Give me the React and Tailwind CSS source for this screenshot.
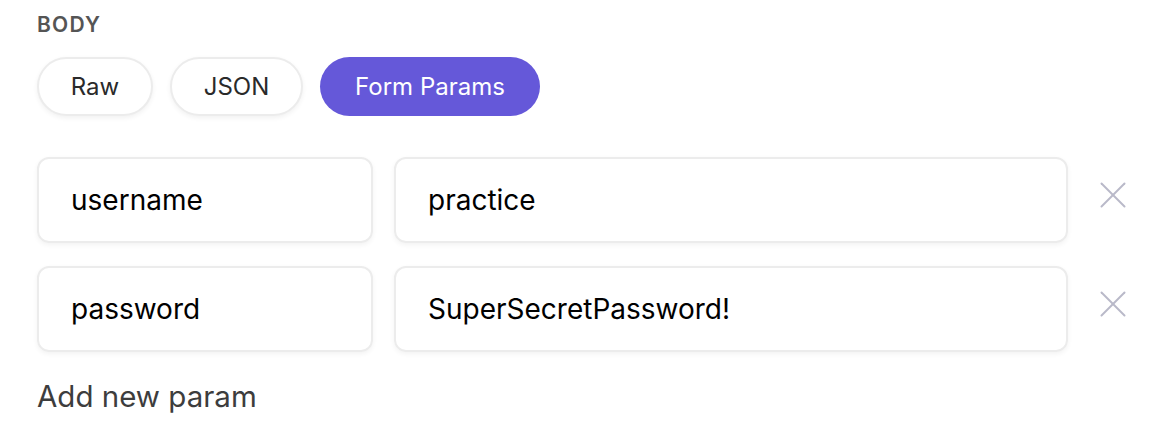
import React, { useState } from 'react'

const XIcon = () => (
  <svg width="26" height="26" viewBox="0 0 26 26" fill="none" stroke="#b9b9c9" strokeWidth="2" strokeLinecap="round">
    <path d="M1.5 1.5 L24.5 24.5" />
    <path d="M24.5 1.5 L1.5 24.5" />
  </svg>
)

const App = () => {
  const [mode, setMode] = useState('form')
  const [params] = useState([
    { key: 'username', value: 'practice' },
    { key: 'password', value: 'SuperSecretPassword!' },
  ])

  const tabs = [
    { id: 'raw', label: 'Raw', w: 'w-[116px]' },
    { id: 'json', label: 'JSON', w: 'w-[133px]' },
    { id: 'form', label: 'Form Params', w: 'w-[220px]' },
  ]

  return (
    <div className="min-h-screen bg-white pl-[37px] pt-[10px] font-['Inter',sans-serif]">
      {/* Section label */}
      <div className="text-[21px] leading-[30px] font-semibold tracking-[0.06em] text-[#555555]">BODY</div>

      {/* Body type tabs */}
      <div className="flex gap-[17px] mt-[17px]">
        {tabs.map((t) => (
          <button
            key={t.id}
            onClick={() => setMode(t.id)}
            className={
              mode === t.id
                ? `${t.w} h-[59px] rounded-full bg-[#6558d9] text-white text-[24px] font-normal`
                : `${t.w} h-[59px] rounded-full bg-white border-2 border-[#ececec] shadow-[0_2px_5px_rgba(0,0,0,0.06)] text-[#2a2a2a] text-[24px] font-normal`
            }
          >
            {t.label}
          </button>
        ))}
      </div>

      {/* Params */}
      <div className="flex flex-col gap-[23px] mt-[41px]">
        {params.map((p) => (
          <div key={p.key} className="flex items-start">
            <div className="w-[336px] h-[86px] rounded-[12px] border-2 border-[#ececec] shadow-[0_2px_5px_rgba(0,0,0,0.05)] flex items-center pl-[32px] text-[28px] font-normal text-black">
              {p.key}
            </div>
            <div className="ml-[21px] w-[674px] h-[86px] rounded-[12px] border-2 border-[#ececec] shadow-[0_2px_5px_rgba(0,0,0,0.05)] flex items-center pl-[32px] text-[28px] font-normal text-black">
              {p.value}
            </div>
            <button className="ml-[32px] mt-[25px] flex items-center justify-center">
              <XIcon />
            </button>
          </div>
        ))}
      </div>

      <div className="mt-[26px] text-[29.5px] leading-[36px] text-[#3d3d3d]">Add new param</div>
    </div>
  )
}

export default App
